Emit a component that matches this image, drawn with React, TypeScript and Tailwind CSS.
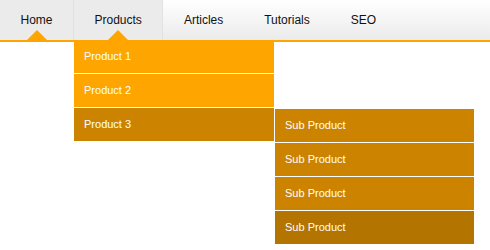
const NAV = ['Home', 'Products', 'Articles', 'Tutorials', 'SEO'];

const PRODUCTS = ['Product 1', 'Product 2', 'Product 3'];
const SUBS = ['Sub Product', 'Sub Product', 'Sub Product', 'Sub Product'];

function Arrow() {
  return (
    <span className="absolute bottom-0 left-1/2 -ml-[10px] h-0 w-0 border-x-[10px] border-b-[10px] border-x-transparent border-b-[#ffa500]" />
  );
}

export default function App() {
  return (
    <div className="h-[250px] w-[490px] bg-white font-['Liberation_Sans',Arial,sans-serif]">
      <nav className="h-[42px] border-b-2 border-[#ffa500] bg-gradient-to-b from-white to-[#ebebeb]">
        <ul className="flex h-10">
          {NAV.map((item, i) => {
            const active = i < 2;
            return (
              <li
                key={item}
                className={`relative flex h-10 items-center px-[20.5px] text-[12px] text-[#111] ${
                  active ? 'border-r border-[#e2e2e2] bg-[#ebebeb]' : ''
                }`}
              >
                {item}
                {active && <Arrow />}
                {item === 'Products' && (
                  <ul className="absolute left-0 top-10 z-10 w-[200px]">
                    {PRODUCTS.map((p, j) => (
                      <li
                        key={p}
                        className={`relative flex h-[34px] items-center border-b border-white px-[10px] text-[11px] text-white ${
                          j === 2 ? 'bg-[#cc8400]' : 'bg-[#ffa500]'
                        }`}
                      >
                        {p}
                        {j === 2 && (
                          <ul className="absolute left-[200px] top-[1px] w-[200px]">
                            {SUBS.map((s, k) => (
                              <li
                                key={k}
                                className={`flex h-[34px] items-center border-b border-l border-white px-[10px] text-[11px] text-white ${
                                  k === 3 ? 'bg-[#b37400]' : 'bg-[#cc8400]'
                                }`}
                              >
                                {s}
                              </li>
                            ))}
                          </ul>
                        )}
                      </li>
                    ))}
                  </ul>
                )}
              </li>
            );
          })}
        </ul>
      </nav>
    </div>
  );
}
